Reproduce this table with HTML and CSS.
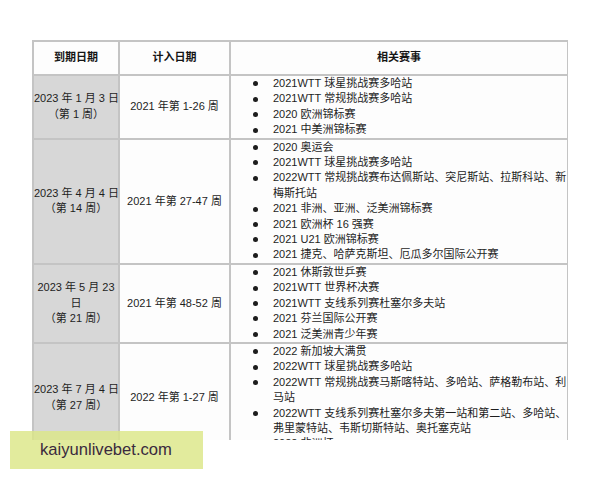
FILE: index.html
```html
<!DOCTYPE html>
<html lang="zh-CN">
<head>
<meta charset="utf-8">
<title>积分到期表</title>
<link rel="stylesheet" href="styles.css">
</head>
<body>
<div class="page">
  <div class="clip">
    <table class="rank">
      <colgroup>
        <col class="c1">
        <col class="c2">
        <col class="c3">
      </colgroup>
      <thead>
        <tr>
          <th>到期日期</th>
          <th>计入日期</th>
          <th>相关赛事</th>
        </tr>
      </thead>
      <tbody>
        <tr>
          <td class="due">2023 年 1 月 3 日<br>（第 1 周）</td>
          <td class="span">2021 年第 1-26 周</td>
          <td class="events">
            <ul>
              <li>2021WTT 球星挑战赛多哈站</li>
              <li>2021WTT 常规挑战赛多哈站</li>
              <li>2020 欧洲锦标赛</li>
              <li>2021 中美洲锦标赛</li>
            </ul>
          </td>
        </tr>
        <tr>
          <td class="due">2023 年 4 月 4 日<br>（第 14 周）</td>
          <td class="span">2021 年第 27-47 周</td>
          <td class="events">
            <ul>
              <li>2020 奥运会</li>
              <li>2021WTT 球星挑战赛多哈站</li>
              <li>2022WTT 常规挑战赛布达佩斯站、突尼斯站、拉斯科站、新<br>梅斯托站</li>
              <li>2021 非洲、亚洲、泛美洲锦标赛</li>
              <li>2021 欧洲杯 16 强赛</li>
              <li>2021 U21 欧洲锦标赛</li>
              <li>2021 捷克、哈萨克斯坦、厄瓜多尔国际公开赛</li>
            </ul>
          </td>
        </tr>
        <tr>
          <td class="due">2023 年 5 月 23<br>日<br>（第 21 周）</td>
          <td class="span">2021 年第 48-52 周</td>
          <td class="events">
            <ul>
              <li>2021 休斯敦世乒赛</li>
              <li>2021WTT 世界杯决赛</li>
              <li>2021WTT 支线系列赛杜塞尔多夫站</li>
              <li>2021 芬兰国际公开赛</li>
              <li>2021 泛美洲青少年赛</li>
            </ul>
          </td>
        </tr>
        <tr>
          <td class="due">2023 年 7 月 4 日<br>（第 27 周）</td>
          <td class="span">2022 年第 1-27 周</td>
          <td class="events">
            <ul>
              <li>2022 新加坡大满贯</li>
              <li>2022WTT 球星挑战赛多哈站</li>
              <li>2022WTT 常规挑战赛马斯喀特站、多哈站、萨格勒布站、利<br>马站</li>
              <li>2022WTT 支线系列赛杜塞尔多夫第一站和第二站、多哈站、<br>弗里蒙特站、韦斯切斯特站、奥托塞克站</li>
              <li>2022 非洲杯</li>
            </ul>
          </td>
        </tr>
      </tbody>
    </table>
  </div>
  <div class="watermark">kaiyunlivebet.com</div>
</div>
</body>
</html>
```

FILE: styles.css
```css
html, body {
  margin: 0;
  padding: 0;
  background: #ffffff;
}

.page {
  position: relative;
  width: 600px;
  height: 480px;
  padding: 40px 0 0 32px;
  box-sizing: border-box;
  font-family: "Liberation Sans", "Noto Sans CJK SC", sans-serif;
  font-size: 11px;
  color: #1e1e1e;
}

.clip {
  width: 536px;
  height: 400px;
  overflow: hidden;
}

.rank {
  table-layout: fixed;
  border-collapse: collapse;
  width: 535px;
  background: #fdfdfd;
}

.c1 { width: 86px; }
.c2 { width: 111px; }
.c3 { width: 338px; }

.rank th,
.rank td {
  border: 2px solid #c4c4c4;
  padding: 0;
  line-height: 15.4px;
  vertical-align: middle;
}

.rank th {
  height: 32px;
  font-weight: bold;
  color: #151515;
  text-align: center;
  background: #fdfdfd;
}

.due {
  background: #d7d7d7;
  text-align: center;
  white-space: nowrap;
  line-height: 15px;
}

.span {
  text-align: center;
  white-space: nowrap;
}

.events {
  padding: 0;
}

.events ul {
  list-style: none;
  margin: 0;
  padding: 0;
}

.events li {
  display: flex;
  white-space: nowrap;
  line-height: 15.4px;
}

.events li::before {
  content: "";
  flex: none;
  width: 5px;
  height: 5px;
  border-radius: 50%;
  background: #1d1d1d;
  margin: 5.4px 15px 0 22px;
}

.watermark {
  position: absolute;
  left: 10px;
  top: 431px;
  width: 193px;
  height: 38px;
  box-sizing: border-box;
  padding-left: 30px;
  line-height: 38px;
  background: rgba(220, 231, 136, 0.82);
  color: #3a2a3e;
  font-size: 16.6px;
  font-family: "Liberation Sans", sans-serif;
}
```
